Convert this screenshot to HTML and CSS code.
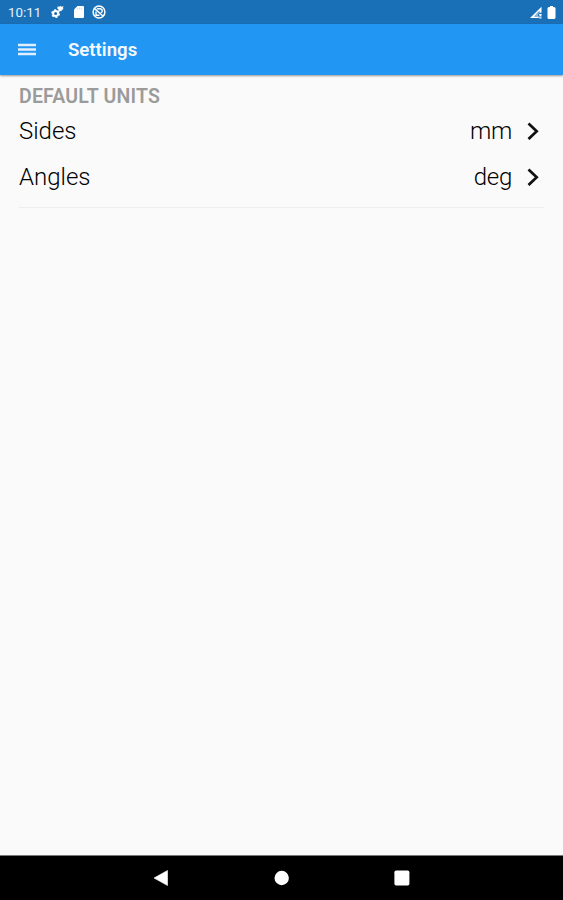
FILE: index.html
```
<!DOCTYPE html>
<html lang="en">
<head>
  <meta charset="UTF-8">
  <meta name="viewport" content="width=device-width, initial-scale=1.0">
  <title>Settings</title>
  <link rel="stylesheet" href="styles.css">
</head>
<body>
  <!-- Status bar -->
  <div class="status-bar">
    <span class="clock">10:11</span>
    <svg class="status-icon gears" width="13" height="14" viewBox="0 0 13 14">
      <circle cx="4.600" cy="8.600" r="2.500" fill="none" stroke="#fff" stroke-width="2"/>
      <circle cx="4.600" cy="8.600" r="3.700" fill="none" stroke="#fff" stroke-width="1.400" stroke-dasharray="2 1.870"/>
      <path d="M6.600 1.400l1.800.3.900-.9.900.9 2.300-.5-.6 1.900.6 1.200-1.600.5-.5 1.500-1.400-.3-1.300.6V4.700L6.300 3.600z" fill="#fff"/>
    </svg>
    <svg class="status-icon card" width="10" height="12" viewBox="0 0 10 12">
      <path d="M3.500 0H9q1 0 1 1v10q0 1-1 1H1q-1 0-1-1V3.500z" fill="#fff"/>
      <path d="M3.600 1.600v2M5.600 1.600v2M7.600 1.600v2" stroke="#b5d0e8" stroke-width=".7"/>
    </svg>
    <svg class="status-icon" width="14" height="14" viewBox="0 0 14 14">
      <g fill="none" stroke="#fff">
        <circle cx="7" cy="7" r="5.900" stroke-width="1.500"/>
        <path d="M2.600 3.600l8.400 7.400" stroke-width="1.400"/>
        <path d="M4.800 3.800h3.400q2.200.4 2 2.600-.3 1.200-1.600 1.400M4 6.500v3.700h3.500" stroke-width="1.400"/>
      </g>
    </svg>
    <div class="status-right">
      <svg width="13" height="13" viewBox="0 0 13 13">
        <path d="M11.500.8v6H9.400v-2L4.200 10.600h4.600V12H0z" fill="#fff"/>
        <path d="M8.600 7.600V5.500L4 10.600h3.500z" fill="#8fb9dc"/>
        <path d="M9.300 8.200l2.200 2M11.500 8.200l-2.200 2M9.300 11.800h2.200" stroke="#fff" stroke-width="1.200"/>
      </svg>
      <svg width="9" height="13" viewBox="0 0 9 13">
        <path d="M3 0h3v1h1q1.500 0 1.500 1.500v9Q8.500 13 7 13H2Q.5 13 .5 11.500v-9Q.5 1 2 1h1z" fill="#fff"/>
      </svg>
    </div>
  </div>

  <!-- App bar -->
  <header class="app-bar">
    <svg class="menu" width="18" height="13" viewBox="0 0 18 13">
      <path d="M0 2h18M0 6.500h18M0 11h18" stroke="#e0eefe" stroke-width="2.400"/>
    </svg>
    <h1>Settings</h1>
  </header>

  <!-- Settings list -->
  <main class="content">
    <h2>DEFAULT UNITS</h2>
    <div class="row">
      <span>Sides</span>
      <span class="value">mm</span>
      <svg class="chevron" width="12" height="18" viewBox="0 0 12 18">
        <path d="M1.500 1.500L9.700 9.300l-8.200 7.800" fill="none" stroke="#111" stroke-width="2.700"/>
      </svg>
    </div>
    <div class="row">
      <span>Angles</span>
      <span class="value">deg</span>
      <svg class="chevron" width="12" height="18" viewBox="0 0 12 18">
        <path d="M1.500 1.500L9.700 9.300l-8.200 7.800" fill="none" stroke="#111" stroke-width="2.700"/>
      </svg>
    </div>
  </main>

  <!-- Android navigation -->
  <nav class="nav-bar">
    <svg width="16" height="16" viewBox="0 0 16 16">
      <path d="M13.500.5v15L0 8z" fill="#fff" stroke="#fff" stroke-width=".6" stroke-linejoin="round"/>
    </svg>
    <svg width="16" height="16" viewBox="0 0 16 16">
      <circle cx="7.700" cy="8" r="7.200" fill="#fff"/>
    </svg>
    <svg width="16" height="16" viewBox="0 0 16 16">
      <rect x=".4" y=".5" width="15" height="15" rx="1.700" fill="#fff"/>
    </svg>
  </nav>
</body>
</html>
```
FILE: styles.css
```
* {
  box-sizing: border-box;
}

body {
  margin: 0;
  height: 100vh;
  display: flex;
  flex-direction: column;
  background: #fafafa;
  font-family: Roboto, sans-serif;
  color: #000;
  overflow: hidden;
}

svg {
  display: block;
  flex: none;
}

.status-bar {
  display: flex;
  align-items: center;
  height: 24px;
  padding: 0 7px 0 8px;
  background: #1a70b7;
  color: #e6f0f8;
}

.clock {
  width: 43px;
  font-size: 13.3px;
}

.gears {
  margin-right: 10px;
}

.card {
  margin-right: 8px;
}

.status-right {
  display: flex;
  gap: 4px;
  margin-left: auto;
}

/* App bar */
.app-bar {
  display: flex;
  align-items: center;
  height: 51px;
  padding-left: 18px;
  background: #2196f3;
  color: #f4f9ff;
  box-shadow: 0 1px 2px rgba(0, 0, 0, 0.4);
}

.app-bar h1 {
  margin: 1px 0 0 32px;
  font-size: 18.6px;
  font-weight: 600;
}

/* Settings list */
.content {
  flex: 1;
  padding: 10px 19px 0;
}

.content h2 {
  margin: 0;
  font-size: 19.5px;
  line-height: 23px;
  font-weight: 600;
  letter-spacing: 0.18px;
  color: #9b9b9b;
}

.row {
  display: flex;
  align-items: center;
  height: 46px;
  padding-right: 5px;
  font-size: 24px;
  font-weight: 300;
}

.row:last-child {
  height: 54px;
  padding-bottom: 8px;
  border-bottom: 1px solid #eeeeee;
}

.value {
  margin-left: auto;
  letter-spacing: -0.3px;
}

.chevron {
  margin-left: 15px;
}

/* Bottom navigation */
.nav-bar {
  display: flex;
  align-items: center;
  justify-content: center;
  gap: 104px;
  height: 45px;
  border-top: 1px solid #777;
  background: #000;
}
```
